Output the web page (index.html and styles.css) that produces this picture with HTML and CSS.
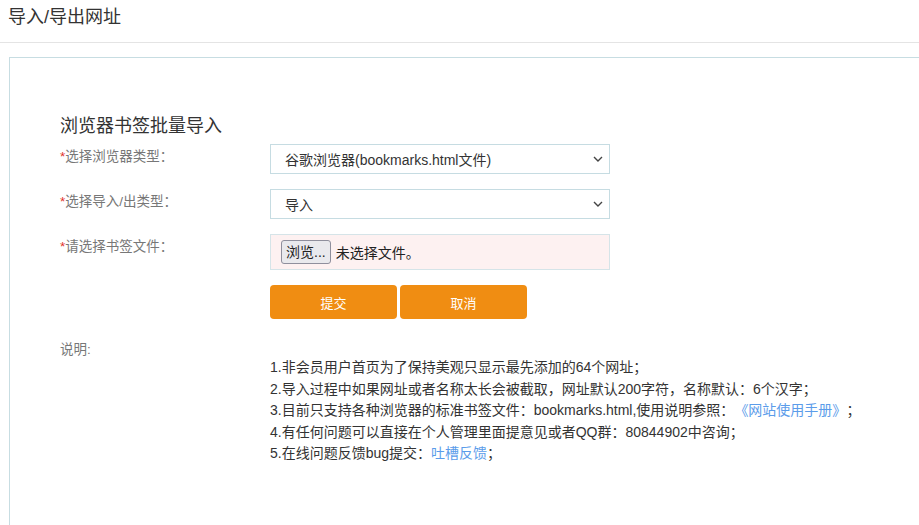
FILE: index.html
```html
<!DOCTYPE html>
<html lang="zh-CN">
<head>
<meta charset="utf-8">
<title>导入/导出网址</title>
<link rel="stylesheet" href="styles.css">
</head>
<body>
<header class="page-header">导入/导出网址</header>
<section class="card">
  <h2 class="card-title">浏览器书签批量导入</h2>
  <div class="form">
    <div class="label"><span class="req">*</span>选择浏览器类型：</div>
    <div class="control">
      <div class="select"><span>谷歌浏览器(bookmarks.html文件)</span>
        <svg class="chev" width="10" height="6" viewBox="0 0 10 6"><path d="M1 1l4 4 4-4" fill="none" stroke="#444" stroke-width="1.4"/></svg>
      </div>
    </div>
    <div class="label"><span class="req">*</span>选择导入/出类型：</div>
    <div class="control">
      <div class="select"><span>导入</span>
        <svg class="chev" width="10" height="6" viewBox="0 0 10 6"><path d="M1 1l4 4 4-4" fill="none" stroke="#444" stroke-width="1.4"/></svg>
      </div>
    </div>
    <div class="label"><span class="req">*</span>请选择书签文件：</div>
    <div class="control">
      <div class="file"><span class="browse">浏览...</span><span class="nofile">未选择文件。</span></div>
    </div>
    <div class="label"></div>
    <div class="control buttons">
      <button class="btn">提交</button>
      <button class="btn">取消</button>
    </div>
    <div class="label note-label">说明:</div>
    <div class="control notes">
      <p>1.非会员用户首页为了保持美观只显示最先添加的64个网址；</p>
      <p>2.导入过程中如果网址或者名称太长会被截取，网址默认200字符，名称默认：6个汉字；</p>
      <p>3.目前只支持各种浏览器的标准书签文件：bookmarks.html,使用说明参照：<a href="#">《网站使用手册》</a>；</p>
      <p>4.有任何问题可以直接在个人管理里面提意见或者QQ群：80844902中咨询；</p>
      <p>5.在线问题反馈bug提交：<a href="#">吐槽反馈</a>；</p>
    </div>
  </div>
</section>
</body>
</html>
```
FILE: styles.css
```css
html, body {
  margin: 0;
  padding: 0;
  background: #fff;
  overflow: hidden;
  font-family: "Liberation Sans", "Noto Sans CJK SC", sans-serif;
  color: #333;
  text-spacing-trim: space-all;
}
.page-header {
  height: 42px;
  line-height: 34px;
  padding-left: 8px;
  font-size: 18px;
  color: #333;
  border-bottom: 1px solid #e4e4e4;
}
.card {
  margin: 14px 0 0 9px;
  border: 1px solid #c7dde2;
  border-right: none;
  min-height: 420px;
  padding: 56px 0 0 50px;
}
.card-title {
  margin: 0 0 6px;
  font-size: 18px;
  line-height: 24px;
  font-weight: normal;
  color: #333;
}
.form {
  display: grid;
  grid-template-columns: 210px 340px;
  row-gap: 15px;
}
.label {
  font-size: 13.5px;
  line-height: 18px;
  padding-top: 4px;
  color: #777;
  white-space: nowrap;
}
.req { color: #e2332b; }
.select {
  height: 28px;
  border: 1px solid #c6dce2;
  display: flex;
  align-items: center;
  justify-content: space-between;
  padding: 0 4px 0 14px;
  font-size: 14px;
  color: #333;
  background: #fff;
}
.chev { margin-right: 2px; }
.file {
  height: 34px;
  border: 1px solid #d5e4e8;
  background: #fdf1f1;
  display: flex;
  align-items: center;
  padding-left: 10px;
  font-size: 14px;
  color: #222;
}
.browse {
  display: inline-block;
  height: 22px;
  line-height: 22px;
  padding: 0 4px;
  background: #e9e9ed;
  border: 1px solid #8f8f9d;
  border-radius: 3px;
  margin-right: 5px;
}
.buttons {
  display: flex;
  gap: 3px;
}
.btn {
  width: 127px;
  height: 34px;
  border: none;
  border-radius: 4px;
  background: #f08d12;
  color: #fff;
  font-family: inherit;
  font-size: 13px;
  padding: 0;
}
.note-label {
  margin-top: 3px;
}
.notes {
  padding-top: 23px;
  width: 620px;
}
.notes p {
  margin: 0;
  font-size: 14px;
  line-height: 21.5px;
  color: #333;
  white-space: nowrap;
}
.notes a {
  color: #5b9cea;
  text-decoration: none;
}
```
